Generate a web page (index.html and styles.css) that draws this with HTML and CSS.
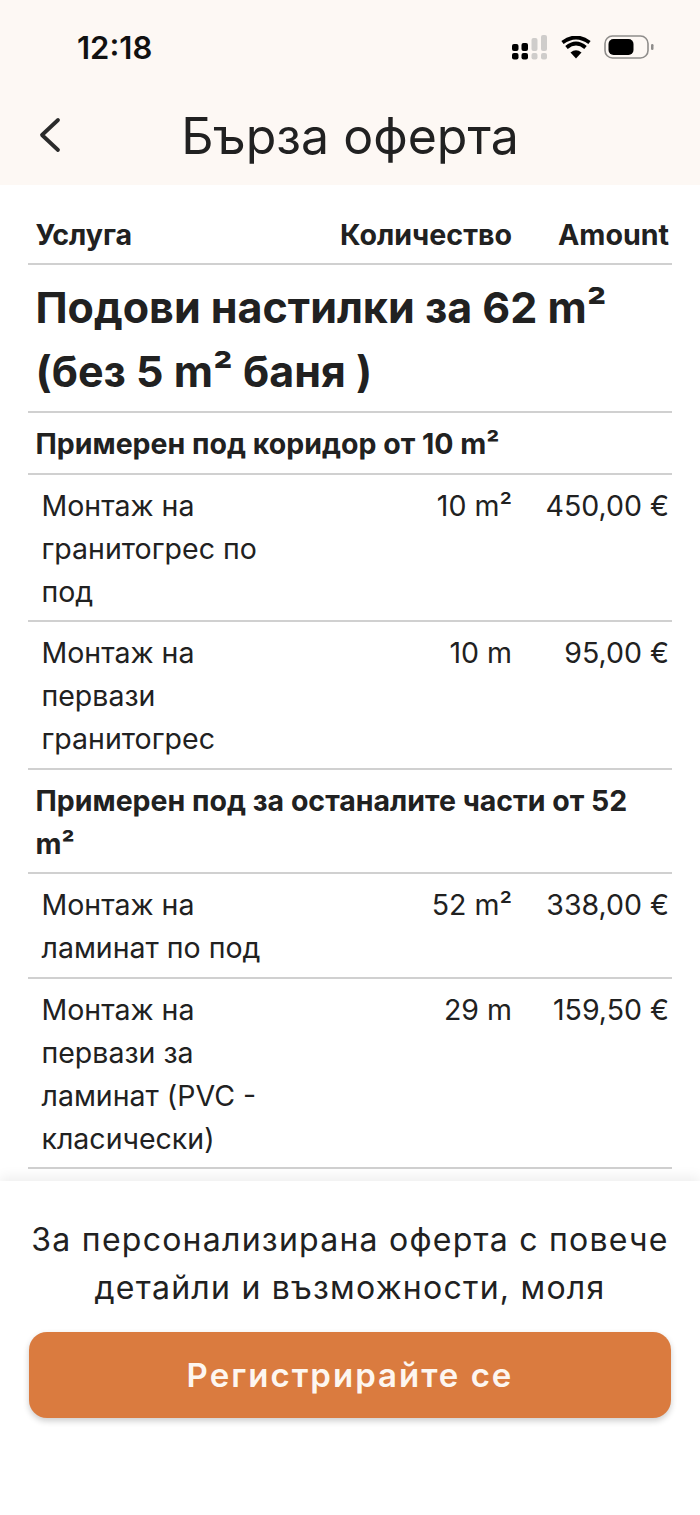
FILE: index.html
```html
<!DOCTYPE html>
<html lang="bg">
	<head>
		<title>Бърза оферта</title>
		<link rel="stylesheet" href="styles.css">
	</head>
	<body>
		<div class="top">
			<div class="status">
				<span class="time">12:18</span>
				<div class="status-icons">
					<svg width="36" height="25" viewBox="0 0 36 25">
						<g fill="#000">
							<rect x="0" y="9" width="6.500" height="7" rx="2"/><rect x="0" y="18" width="6.500" height="6.500" rx="2"/>
							<rect x="9.500" y="8" width="6.500" height="8" rx="2"/><rect x="9.500" y="18" width="6.500" height="6.500" rx="2"/>
						</g>
						<g fill="#cfcdcb">
							<rect x="19.500" y="3" width="6" height="13" rx="2"/><rect x="19.500" y="18" width="6" height="6.500" rx="2"/>
							<rect x="29" y="0" width="6" height="16" rx="2"/><rect x="29" y="18" width="6" height="6.500" rx="2"/>
						</g>
					</svg>
					<svg class="wifi" width="30" height="23" viewBox="0 0 30 23">
						<path d="M15 22.500L9.500 16.500Q15 12 20.500 16.500Z" fill="#000"/>
						<path d="M5.500 11.500Q15 3.500 24.500 11.500" fill="none" stroke="#000" stroke-width="3.800"/>
						<path d="M1.500 6.500Q15 -3.500 28.500 6.500" fill="none" stroke="#000" stroke-width="3.800"/>
					</svg>
					<svg width="50" height="24" viewBox="0 0 50 24">
						<rect x="1" y="1" width="43" height="22" rx="7.500" fill="none" stroke="#8f8d8b" stroke-width="1.600"/>
						<rect x="4.500" y="4" width="25" height="16" rx="5" fill="#000"/>
						<rect x="47" y="9" width="2.500" height="6" rx="1.200" fill="#8f8d8b"/>
					</svg>
				</div>
			</div>
			<div class="nav">
				<svg class="back" width="24" height="36" viewBox="0 0 24 36">
					<path d="M20 3L4 18l16 15" fill="none" stroke="#2b2b2b" stroke-width="3.800" stroke-linecap="round" stroke-linejoin="round"/>
				</svg>
				<h1>Бърза оферта</h1>
			</div>
		</div>

		<div class="content">
			<div class="row head">
				<div class="c-name">Услуга</div>
				<div class="c-qty">Количество</div>
				<div class="c-amt">Amount</div>
			</div>
			<div class="section">Подови настилки за 62 m²<br>(без 5 m² баня )</div>
			<div class="group">Примерен под коридор от 10 m²</div>
			<div class="row item">
				<div class="c-name">Монтаж на гранитогрес по под</div>
				<div class="c-qty">10 m²</div>
				<div class="c-amt">450,00 €</div>
			</div>
			<div class="row item">
				<div class="c-name">Монтаж на первази гранитогрес</div>
				<div class="c-qty">10 m</div>
				<div class="c-amt">95,00 €</div>
			</div>
			<div class="group">Примерен под за останалите части от 52 m²</div>
			<div class="row item">
				<div class="c-name">Монтаж на ламинат по под</div>
				<div class="c-qty">52 m²</div>
				<div class="c-amt">338,00 €</div>
			</div>
			<div class="row item">
				<div class="c-name">Монтаж на первази за ламинат (PVC - класически)</div>
				<div class="c-qty">29 m</div>
				<div class="c-amt">159,50 €</div>
			</div>
		</div>

		<div class="footer">
			<p>За персонализирана оферта с повече детайли и възможности, моля</p>
			<button class="register">Регистрирайте се</button>
		</div>
	</body>
</html>
```

FILE: styles.css
```css
html, body {
	margin: 0;
	height: 1515px;
	overflow: hidden;
}
body {
	font-family: "Inter", "Noto Sans", sans-serif;
	color: #212121;
	background: #fff;
	display: flex;
	flex-direction: column;
}
.top {
	background: #fdf8f4;
	height: 185px;
	flex: none;
}
.status {
	height: 94px;
	display: flex;
	justify-content: space-between;
	align-items: center;
	padding: 0 46px 0 77px;
}
.time {
	font-size: 31px;
	font-weight: 600;
	color: #111;
}
.status-icons {
	display: flex;
	align-items: center;
	gap: 13px;
}
.nav {
	position: relative;
	text-align: center;
}
.back {
	position: absolute;
	left: 38px;
	top: 23px;
}
.nav h1 {
	margin: 0;
	font-size: 50px;
	font-weight: 400;
	line-height: 84px;
}
.content {
	flex: 1;
	min-height: 0;
	padding: 0 28px;
	overflow: hidden;
}
.row {
	display: flex;
	border-bottom: 2px solid #d0d0d0;
}
.c-name {
	flex: 1;
	min-width: 0;
}
.c-amt {
	width: 157px;
	text-align: right;
	padding-right: 3px;
}
.head {
	font-size: 28.600px;
	font-weight: 700;
	line-height: 33px;
	padding: 33px 0 12px 7.500px;
}
.section {
	font-size: 43px;
	font-weight: 700;
	line-height: 64px;
	padding: 10px 7.500px 8px;
	border-bottom: 2px solid #d0d0d0;
}
.group {
	font-size: 28.500px;
	font-weight: 700;
	line-height: 43px;
	padding: 9px 7.500px 7.500px;
	border-bottom: 2px solid #d0d0d0;
}
.item {
	font-size: 28.500px;
	line-height: 43px;
	padding: 9px 0 7.500px 13.500px;
}
.item .c-name {
	flex: none;
	width: 240px;
}
.item .c-qty {
	margin-left: auto;
}
.footer {
	flex: none;
	height: 334px;
	padding: 35px 29px 0;
	box-sizing: border-box;
	background: #fff;
	box-shadow: 0 -4px 12px rgba(0,0,0,0.07);
}
.footer p {
	margin: 0 0 20px;
	text-align: center;
	font-size: 32px;
	line-height: 48px;
	letter-spacing: 1.250px;
}
.register {
	display: block;
	width: 100%;
	height: 86px;
	border: 0;
	border-radius: 18px;
	background: #da7b3f;
	color: #fdf6f0;
	font-family: inherit;
	font-size: 33px;
	font-weight: 600;
	letter-spacing: 2px;
	box-shadow: 0 3px 6px rgba(0,0,0,0.2);
}
```
